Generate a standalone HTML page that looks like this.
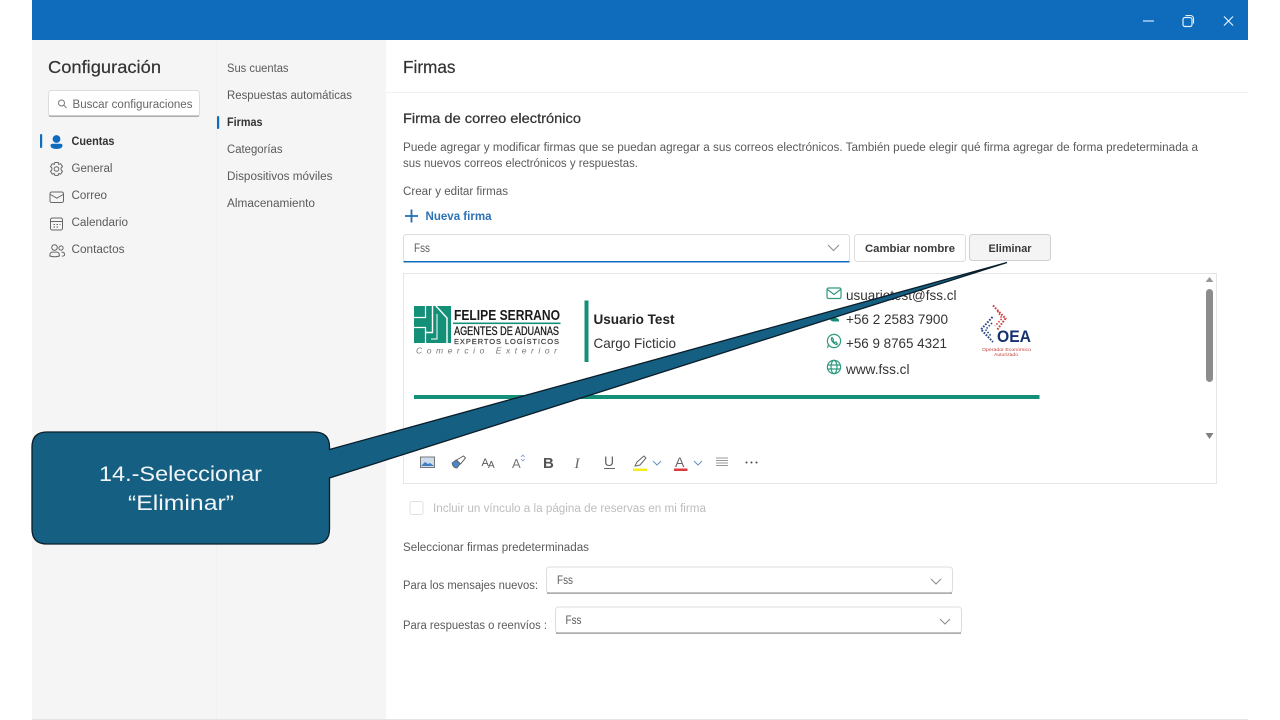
<!DOCTYPE html>
<html lang="es"><head><meta charset="utf-8"><title>Firmas</title>
<style>
html,body{margin:0;padding:0;background:#fff;width:1280px;height:720px;overflow:hidden}
svg{display:block}
text{font-family:"Liberation Sans",sans-serif;font-size:12px;fill:#424242;white-space:pre}
.s{font-size:11.5px;fill:#5a5a5a}
.ic{fill:none;stroke:#666;stroke-width:1}
.g{fill:none;stroke:#2f9a80;stroke-width:1.2}
</style></head><body>
<svg width="1280" height="720" viewBox="0 0 1280 720" xmlns="http://www.w3.org/2000/svg">
<rect x="32" y="40" width="1216" height="680" fill="#fff"/>
<rect x="32" y="40" width="354" height="680" fill="#f5f5f5"/>
<rect x="216" y="40" width="1" height="680" fill="#f0f0f0"/>
<rect x="32" y="0" width="1216" height="40" fill="#0f6cbd"/>
<rect x="386" y="92" width="862" height="1" fill="#f0f0f0"/>
<rect x="32" y="719" width="1216" height="1" fill="#e4e4e4"/>

<!-- window controls -->
<path d="M1143 21h11" stroke="#d5e6f5" stroke-width="1.200" fill="none"/>
<rect x="1183" y="17.500" width="9" height="9" rx="2" fill="none" stroke="#e5f0fa" stroke-width="1.200"/>
<path d="M1185.500 15.500h5a3 3 0 0 1 3 3v5" fill="none" stroke="#e5f0fa" stroke-width="1.100"/>
<path d="M1224 16.500l9 9M1233 16.500l-9 9" stroke="#e5f0fa" stroke-width="1.200" fill="none"/>

<!-- left nav -->
<text x="48" y="73" style="font-size:17.500px;fill:#333;stroke:#333;stroke-width:.2" textLength="113" lengthAdjust="spacingAndGlyphs">Configuración</text>
<rect x="48.500" y="90.500" width="151" height="26" rx="3" fill="#fff" stroke="#dcdcdc"/>
<rect x="49" y="115.500" width="150" height="1.200" fill="#999"/>
<circle cx="61.500" cy="103" r="3" fill="none" stroke="#777" stroke-width="1"/><path d="M63.800 105.300l2.700 2.700" stroke="#777" fill="none"/>
<text class="s" x="72.500" y="108" textLength="120" lengthAdjust="spacingAndGlyphs" style="fill:#666">Buscar configuraciones</text>

<rect x="40" y="134" width="2.200" height="14" rx="1" fill="#0f6cbd"/>
<circle cx="56.500" cy="139" r="3.900" fill="#0f6cbd"/>
<path d="M50.500 145.500q0-1.800 2-1.800h8q2 0 2 1.800q0 3.500-6 3.500t-6-3.500z" fill="#0f6cbd"/>
<text class="s" x="71.500" y="145" textLength="43" lengthAdjust="spacingAndGlyphs" style="font-weight:bold;fill:#333">Cuentas</text>

<circle cx="56.500" cy="169" r="2.300" class="ic"/>
<path d="M54.800 162.500h3.400l.6 1.900 1.900-.7 1.800 2.900-1.400 1.400v1.900l1.400 1.400-1.800 2.900-1.900-.7-.6 1.900h-3.400l-.6-1.900-1.900.7-1.800-2.900 1.400-1.400v-1.900l-1.400-1.400 1.800-2.900 1.900.7z" class="ic"/>
<text class="s" x="71.500" y="172" textLength="41" lengthAdjust="spacingAndGlyphs">General</text>

<rect x="50" y="192" width="13.500" height="10.500" rx="1.800" class="ic"/><path d="M50.500 194.500l6.300 3.700 6.300-3.700" class="ic"/>
<text class="s" x="71.500" y="199" textLength="35.500" lengthAdjust="spacingAndGlyphs">Correo</text>

<rect x="50.500" y="218" width="12" height="12" rx="1.800" class="ic"/><path d="M50.500 221.500h12" class="ic"/><path d="M53.500 224.500h1.500M56.500 224.500h1.500M53.500 227h1.500M56.500 227h1.500M59.500 224.500h1" stroke="#616161" fill="none"/>
<text class="s" x="71.500" y="226" textLength="56.500" lengthAdjust="spacingAndGlyphs">Calendario</text>

<circle cx="54.500" cy="247.500" r="2.800" class="ic"/><circle cx="61" cy="248" r="2.100" class="ic"/>
<path d="M49.800 256q0-3.900 2.500-3.900h4.600q2.500 0 2.500 3.900q-4.800 1.500-9.600 0zM61.500 252.300h1.400q1.600 0 1.600 2.700q0 1-2.600 1.200" class="ic"/>
<text class="s" x="71.500" y="253" textLength="53" lengthAdjust="spacingAndGlyphs">Contactos</text>

<!-- sub nav -->
<text class="s" x="227" y="72" textLength="61.500" lengthAdjust="spacingAndGlyphs">Sus cuentas</text>
<text class="s" x="227" y="99" textLength="125" lengthAdjust="spacingAndGlyphs">Respuestas automáticas</text>
<rect x="217" y="116" width="2.200" height="13" rx="1" fill="#0f6cbd"/>
<text class="s" x="227" y="126" textLength="35.500" lengthAdjust="spacingAndGlyphs" style="font-weight:bold;fill:#333">Firmas</text>
<text class="s" x="227" y="153" textLength="55.500" lengthAdjust="spacingAndGlyphs">Categorías</text>
<text class="s" x="227" y="180" textLength="105.500" lengthAdjust="spacingAndGlyphs">Dispositivos móviles</text>
<text class="s" x="227" y="207" textLength="88" lengthAdjust="spacingAndGlyphs">Almacenamiento</text>

<!-- main -->
<text x="403" y="73" style="font-size:17.500px;fill:#333;stroke:#333;stroke-width:.2" textLength="52.500" lengthAdjust="spacingAndGlyphs">Firmas</text>
<text x="403" y="123" style="font-size:14px;fill:#333;stroke:#333;stroke-width:.25" textLength="178" lengthAdjust="spacingAndGlyphs">Firma de correo electrónico</text>
<text class="s" x="403" y="151" textLength="795" lengthAdjust="spacingAndGlyphs">Puede agregar y modificar firmas que se puedan agregar a sus correos electrónicos. También puede elegir qué firma agregar de forma predeterminada a</text>
<text class="s" x="403" y="167" textLength="235" lengthAdjust="spacingAndGlyphs">sus nuevos correos electrónicos y respuestas.</text>
<text class="s" x="403" y="195" textLength="105" lengthAdjust="spacingAndGlyphs">Crear y editar firmas</text>

<path d="M411.500 209.500v13M405 216h13" stroke="#1f6fb5" stroke-width="1.800" fill="none"/>
<text class="s" x="425.500" y="220" textLength="66" lengthAdjust="spacingAndGlyphs" style="fill:#2a72b5;font-weight:bold">Nueva firma</text>

<rect x="403.500" y="234.500" width="446" height="27" rx="3" fill="#fff" stroke="#dedede"/>
<rect x="403.500" y="261" width="446" height="1.500" fill="#0f6cbd"/>
<text class="s" x="414" y="252" textLength="16" lengthAdjust="spacingAndGlyphs">Fss</text>
<path d="M828 245l5.500 5.500 5.500-5.500" fill="none" stroke="#8a8a8a"/>

<rect x="854.500" y="234.500" width="111" height="27" rx="3" fill="#fff" stroke="#dedede"/>
<text class="s" x="865" y="252" textLength="90" lengthAdjust="spacingAndGlyphs" style="fill:#3a3a3a;font-weight:bold;font-size:11px">Cambiar nombre</text>
<rect x="969.500" y="234.500" width="81" height="26" rx="3" fill="#f4f4f4" stroke="#cfcfcf"/>
<text class="s" x="988.500" y="252" textLength="43" lengthAdjust="spacingAndGlyphs" style="fill:#3a3a3a;font-weight:bold;font-size:11px">Eliminar</text>

<!-- editor -->
<rect x="403.500" y="273.500" width="813" height="210" fill="#fff" stroke="#e6e6e6"/>

<!-- logo -->
<rect x="414" y="306" width="37" height="37" fill="#159078"/>
<path d="M414 317.500h11.500v-11.500M414 327.500h11.500v15.500" fill="none" stroke="#fff" stroke-width="1.200"/>
<path d="M432.500 306v26.500h-7" fill="none" stroke="#fff" stroke-width="1.400"/>
<path d="M436 306l11 12v25" fill="none" stroke="#fff" stroke-width="1.400"/>
<path d="M437 314v25h-6" fill="none" stroke="#fff" stroke-width="1"/>
<text x="454" y="320" style="font-size:15px;font-weight:bold;fill:#1a1a1a" textLength="106" lengthAdjust="spacingAndGlyphs">FELIPE SERRANO</text>
<rect x="453" y="322.500" width="107.500" height="1.600" fill="#159078"/>
<text x="454" y="335" style="font-size:12px;fill:#1a1a1a;stroke:#1a1a1a;stroke-width:.3" textLength="105" lengthAdjust="spacingAndGlyphs">AGENTES DE ADUANAS</text>
<text x="454" y="344" style="font-size:7.500px;fill:#333;stroke:#333;stroke-width:.15" textLength="105" lengthAdjust="spacing">EXPERTOS LOGÍSTICOS</text>
<text x="416" y="353.500" style="font-size:8.500px;font-style:italic;fill:#777" textLength="141" lengthAdjust="spacing">Comercio Exterior</text>

<rect x="584.500" y="300.500" width="4" height="61.500" fill="#159078"/>
<text x="593.500" y="324" style="font-size:14px;font-weight:bold;fill:#222" textLength="81" lengthAdjust="spacingAndGlyphs">Usuario Test</text>
<text x="593.500" y="348" style="font-size:14px;fill:#333" textLength="82.500" lengthAdjust="spacingAndGlyphs">Cargo Ficticio</text>

<!-- contacts -->
<rect x="827" y="288" width="14" height="10.500" rx="1.500" class="g"/><path d="M827.500 289.500l6.500 5 6.500-5" class="g"/>
<text x="846" y="300" style="font-size:14px;fill:#333" textLength="110.500" lengthAdjust="spacingAndGlyphs">usuariotest@fss.cl</text>
<path d="M829 316q3-2 4 0l1.500 1.500q2 0 4.500 2v2h-6q-4-1-4-5.500z" fill="#159078"/>
<text x="846" y="324" style="font-size:14px;fill:#333" textLength="102" lengthAdjust="spacingAndGlyphs">+56 2 2583 7900</text>
<circle cx="834" cy="341" r="6.600" class="g"/><path d="M827.500 348l1.200-3.800M831.500 338q-.5 2.500 2 4.800t4 1.200l-1.500-2-1.500 .6-1.500-1.800.5-1.300-1.500-2z" class="g"/>
<text x="846" y="348" style="font-size:14px;fill:#333" textLength="101" lengthAdjust="spacingAndGlyphs">+56 9 8765 4321</text>
<circle cx="834" cy="367" r="6.600" class="g"/><ellipse cx="834" cy="367" rx="3" ry="6.600" class="g"/><path d="M827.500 365h13M827.500 369h13" class="g"/>
<text x="846" y="374" style="font-size:14px;fill:#333" textLength="63.500" lengthAdjust="spacingAndGlyphs">www.fss.cl</text>

<!-- OEA logo -->
<path d="M993 305.500L1005.500 318.500L997 330" fill="none" stroke="#d0413e" stroke-width="2" stroke-dasharray="1.700 1.300"/>
<path d="M997.500 311L1002 318.500L995 326" fill="none" stroke="#d0413e" stroke-width="1.600" stroke-dasharray="1.500 1.600"/>
<path d="M992.500 317L981 329.500L993 342" fill="none" stroke="#2c4a86" stroke-width="2" stroke-dasharray="1.700 1.300"/>
<path d="M992 323L985.500 329.500L991 336" fill="none" stroke="#2c4a86" stroke-width="1.600" stroke-dasharray="1.500 1.600"/>
<text x="997" y="342" style="font-size:17px;font-weight:bold;fill:#16316e" textLength="34" lengthAdjust="spacingAndGlyphs">OEA</text>
<text x="982" y="351" style="font-size:4.500px;fill:#c8403c" textLength="49" lengthAdjust="spacingAndGlyphs">Operador Económico</text>
<text x="994" y="356" style="font-size:4.500px;fill:#c8403c" textLength="24" lengthAdjust="spacingAndGlyphs">Autorizado</text>

<rect x="414" y="395" width="625.500" height="4" fill="#159078"/>

<!-- scrollbar -->
<path d="M1209.500 277l4 5h-8z" fill="#999"/>
<rect x="1206" y="289" width="7" height="93" rx="3.500" fill="#8c8c8c"/>
<path d="M1205.500 433h8l-4 6z" fill="#808080"/>

<!-- toolbar -->
<rect x="420.500" y="457" width="14" height="10.500" fill="#cfdcec" stroke="#777" stroke-width="1"/><path d="M421 466l4-4 3 2 2-1 4 3z" fill="#3e7fc4"/>
<path d="M452 463l4-3 4 4-3 4q-4 0-5-5z" fill="#4a86c8" stroke="#555" stroke-width=".7"/><path d="M456.500 460l7-4 2 2-5 6z" fill="none" stroke="#666"/>
<text x="481.500" y="466" style="font-size:11px;fill:#555">A</text><text x="488" y="468" style="font-size:10px;fill:#555">A</text>
<text x="512" y="468" style="font-size:13px;fill:#777">A</text><path d="M521 457l1.800-2 1.800 2M521 459l1.800 2 1.800-2" stroke="#5b8fcf" stroke-width=".7" fill="none"/>
<text x="543" y="468" style="font-size:15px;font-weight:bold;fill:#555">B</text>
<text x="574.500" y="468" style="font-size:15px;font-style:italic;fill:#666;font-family:'Liberation Serif',serif">I</text>
<text x="604" y="466" style="font-size:14px;fill:#666">U</text><rect x="604" y="468" width="11" height="1" fill="#666"/>
<path d="M635 466l2-4 7-6 2 2-6 7-4 1z" fill="none" stroke="#666"/><rect x="633" y="468.500" width="14" height="2.500" fill="#f3ec1e"/>
<path d="M653 461l4 4 4-4" fill="none" stroke="#6b90c4"/>
<text x="675" y="467" style="font-size:14px;fill:#666">A</text><rect x="674" y="468.500" width="13.500" height="2.500" fill="#dc3c3c"/>
<path d="M694 461l4 4 4-4" fill="none" stroke="#6b90c4"/>
<path d="M716 458h12M716 460.500h12M716 463h12M716 465.500h12" stroke="#777" stroke-width=".8" fill="none"/>
<circle cx="746.500" cy="462.500" r="1" fill="#444"/><circle cx="751.500" cy="462.500" r="1" fill="#444"/><circle cx="756.500" cy="462.500" r="1" fill="#444"/>

<!-- checkbox -->
<rect x="410" y="501.500" width="13" height="13" rx="2" fill="#fff" stroke="#e0e0e0"/>
<text class="s" x="433" y="512" textLength="273" lengthAdjust="spacingAndGlyphs" style="fill:#bdbdbd">Incluir un vínculo a la página de reservas en mi firma</text>

<text class="s" x="403" y="551" textLength="186" lengthAdjust="spacingAndGlyphs">Seleccionar firmas predeterminadas</text>
<text class="s" x="403" y="589" textLength="135" lengthAdjust="spacingAndGlyphs">Para los mensajes nuevos:</text>
<rect x="546.500" y="567" width="406" height="26" rx="3" fill="#fff" stroke="#dedede"/><rect x="547" y="592.500" width="405" height="1.200" fill="#8a8a8a"/>
<text class="s" x="557" y="584" textLength="16" lengthAdjust="spacingAndGlyphs">Fss</text>
<path d="M931 579l5 5 5-5" fill="none" stroke="#8a8a8a"/>
<text class="s" x="403" y="629" textLength="144" lengthAdjust="spacingAndGlyphs">Para respuestas o reenvíos :</text>
<rect x="555.500" y="607" width="406" height="26" rx="3" fill="#fff" stroke="#dedede"/><rect x="556" y="632.500" width="405" height="1.200" fill="#8a8a8a"/>
<text class="s" x="565.500" y="624" textLength="16" lengthAdjust="spacingAndGlyphs">Fss</text>
<path d="M940 619l5 5 5-5" fill="none" stroke="#8a8a8a"/>

<!-- callout -->
<path d="M47 432H314Q329.500 432 329.500 447V449.500L1007 262.500L329.500 478V529Q329.500 544 314 544H47Q32 544 32 529V447Q32 432 47 432Z" fill="#156082" stroke="#0a1d2a" stroke-width="1.300"/>
<text x="180.500" y="481" text-anchor="middle" style="font-size:21px;fill:#f2f6f8" textLength="163" lengthAdjust="spacingAndGlyphs">14.-Seleccionar</text>
<text x="181" y="510" text-anchor="middle" style="font-size:21px;fill:#f2f6f8" textLength="106" lengthAdjust="spacingAndGlyphs">“Eliminar”</text>
</svg>
</body></html>
